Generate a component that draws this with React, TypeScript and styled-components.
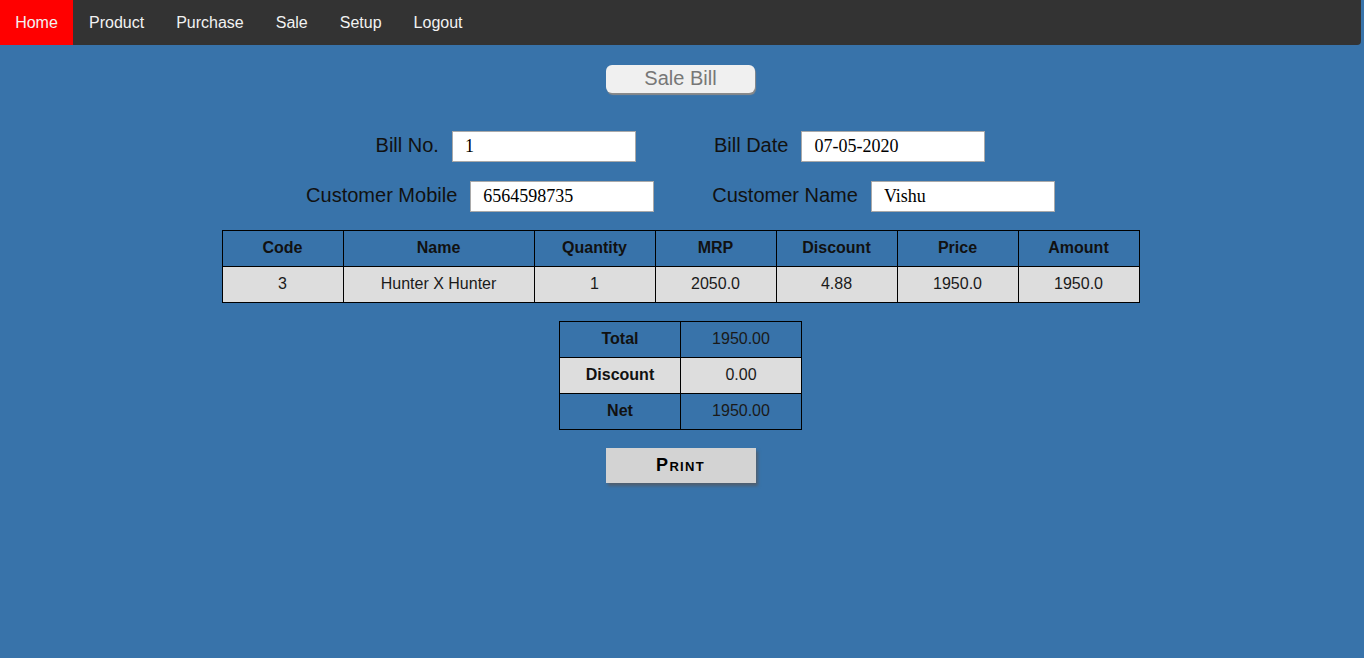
import React from "react";
import styled, { createGlobalStyle } from "styled-components";

const GlobalStyle = createGlobalStyle`
  html, body {
    margin: 0;
    padding: 0;
    background: #3873aa;
    font-family: "Liberation Sans", Arial, sans-serif;
  }
  #root { min-height: 658px; }
`;

const Page = styled.div`
  width: 1364px;
  min-height: 658px;
  background: #3873aa;
`;

const Nav = styled.nav`
  width: 1361px;
  height: 45px;
  background: #333333;
  display: flex;
  align-items: stretch;
  border-bottom-right-radius: 4px;
  overflow: hidden;
`;

const NavItem = styled.a<{ $active?: boolean }>`
  display: flex;
  align-items: center;
  justify-content: center;
  padding: 0 16px;
  ${(p) => (p.$active ? "width: 73px; padding-left: 0; padding-right: 0; box-sizing: border-box;" : "")}
  color: #f2f2f2;
  font-size: 16px;
  text-decoration: none;
  background: ${(p) => (p.$active ? "#ff0000" : "transparent")};
  cursor: pointer;
`;

const Main = styled.main`
  display: flex;
  flex-direction: column;
  align-items: center;
  width: 1361px;
  padding-top: 20px;
`;

const TitleButton = styled.button`
  width: 149px;
  height: 28px;
  border: none;
  border-radius: 6px;
  background: #f0f0f0;
  color: #777777;
  font-family: "Liberation Sans", Arial, sans-serif;
  font-size: 20px;
  box-shadow: 1px 2px 1px #8a8a8a;
  padding: 0 0 2px;
  margin-bottom: 37px;
`;

const FormRow = styled.div<{ $gap: number }>`
  display: flex;
  align-items: center;
  justify-content: center;
  height: 32px;
  margin-bottom: 18px;
  column-gap: ${(p) => p.$gap}px;
`;

const Field = styled.div`
  display: flex;
  align-items: center;
  gap: 13px;
`;

const Label = styled.label`
  font-size: 20px;
  color: #111111;
  padding-bottom: 2px;
`;

const Input = styled.input`
  box-sizing: border-box;
  width: 184px;
  height: 31px;
  border: 1px solid #a9a9a9;
  background: #ffffff;
  font-family: "Liberation Serif", "Times New Roman", serif;
  font-size: 18px;
  color: #000;
  padding: 0 12px;
  outline: none;
`;

const Table = styled.table`
  border-collapse: collapse;
  margin-bottom: 18px;
`;

const Th = styled.th<{ $w: number }>`
  width: ${(p) => p.$w}px;
  height: 33px;
  border: 1px solid #000;
  padding: 0 0 2px;
  font-size: 16px;
  font-weight: bold;
  color: #111;
  text-align: center;
`;

const Td = styled.td<{ $shade?: boolean; $bold?: boolean; $w?: number }>`
  ${(p) => (p.$w ? `width: ${p.$w}px;` : "")}
  height: 33px;
  border: 1px solid #000;
  padding: 0 0 2px;
  font-size: 16px;
  font-weight: ${(p) => (p.$bold ? "bold" : "normal")};
  color: ${(p) => (p.$bold ? "#111" : "#1a1a1a")};
  text-align: center;
  background: ${(p) => (p.$shade ? "#dddddd" : "transparent")};
`;

const PrintButton = styled.button`
  width: 150px;
  height: 35px;
  border: none;
  background: #d3d3d3;
  box-shadow: 2px 3px 3px #4f5f70;
  font-family: "Liberation Sans", Arial, sans-serif;
  font-size: 18px;
  font-weight: bold;
  font-variant: small-caps;
  letter-spacing: 1.3px;
  color: #000;
  padding: 0;
`;

const columns: [string, number][] = [
  ["Code", 120],
  ["Name", 190],
  ["Quantity", 120],
  ["MRP", 120],
  ["Discount", 120],
  ["Price", 120],
  ["Amount", 120],
];

const row = ["3", "Hunter X Hunter", "1", "2050.0", "4.88", "1950.0", "1950.0"];

const summary: [string, string][] = [
  ["Total", "1950.00"],
  ["Discount", "0.00"],
  ["Net", "1950.00"],
];

export default function App() {
  return (
    <Page>
      <GlobalStyle />
      <Nav>
        <NavItem $active>Home</NavItem>
        <NavItem>Product</NavItem>
        <NavItem>Purchase</NavItem>
        <NavItem>Sale</NavItem>
        <NavItem>Setup</NavItem>
        <NavItem>Logout</NavItem>
      </Nav>
      <Main>
        <TitleButton>Sale Bill</TitleButton>
        <FormRow $gap={78}>
          <Field>
            <Label>Bill No.</Label>
            <Input defaultValue="1" />
          </Field>
          <Field>
            <Label>Bill Date</Label>
            <Input defaultValue="07-05-2020" />
          </Field>
        </FormRow>
        <FormRow $gap={58}>
          <Field>
            <Label>Customer Mobile</Label>
            <Input defaultValue="6564598735" />
          </Field>
          <Field>
            <Label>Customer Name</Label>
            <Input defaultValue="Vishu" />
          </Field>
        </FormRow>
        <Table>
          <thead>
            <tr>
              {columns.map(([c, w]) => (
                <Th key={c} $w={w}>
                  {c}
                </Th>
              ))}
            </tr>
          </thead>
          <tbody>
            <tr>
              {row.map((v, i) => (
                <Td key={i} $shade>
                  {v}
                </Td>
              ))}
            </tr>
          </tbody>
        </Table>
        <Table>
          <tbody>
            {summary.map(([k, v], i) => (
              <tr key={k}>
                <Td $bold $w={120} $shade={i === 1}>
                  {k}
                </Td>
                <Td $w={120} $shade={i === 1}>
                  {v}
                </Td>
              </tr>
            ))}
          </tbody>
        </Table>
        <PrintButton>Print</PrintButton>
      </Main>
    </Page>
  );
}
